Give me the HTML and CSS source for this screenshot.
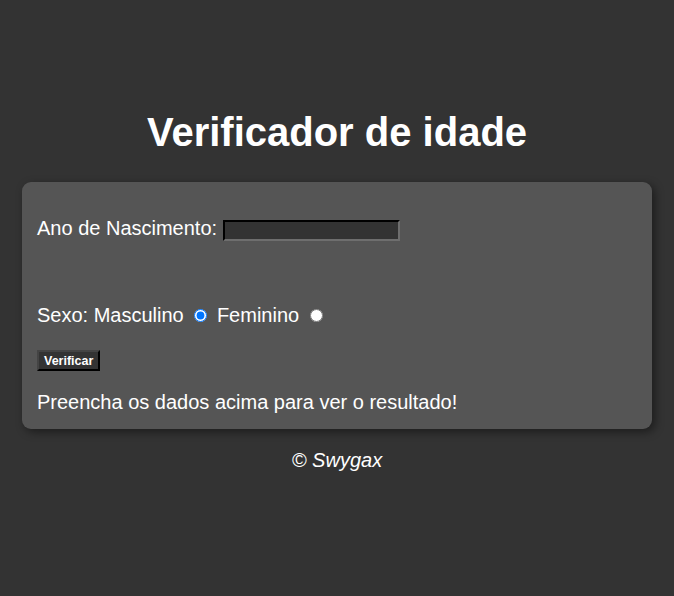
FILE: index.html
```html
<!DOCTYPE html>
<html lang="pt-br">
<head>
<meta charset="UTF-8">
<title>Verificador de idade</title>
<link rel="stylesheet" href="styles.css">
</head>
<body>
<header class="topo">
  <h1 class="titulo">Verificador de idade</h1>
</header>
<section class="painel">
  <div class="form">
    <p class="linha">Ano de Nascimento: <input type="number" class="campo" id="txtano"></p>
    <p class="linha sexo">Sexo:
      <label for="mas">Masculino</label> <input type="radio" name="radsex" id="mas" checked>
      <label for="fem">Feminino</label> <input type="radio" name="radsex" id="fem">
    </p>
    <p class="linha acao"><input type="button" value="Verificar" class="botao"></p>
  </div>
  <div class="res">Preencha os dados acima para ver o resultado!</div>
</section>
<footer class="rodape"><p>&copy; Swygax</p></footer>
</body>
</html>
```
FILE: styles.css
```css
html, body {
  margin: 0;
  padding: 0;
}
body {
  background: #333333;
  color: #ffffff;
  font-family: "Liberation Sans", Arial, sans-serif;
  font-size: 20px;
  padding-top: 109px;
}
.titulo {
  text-align: center;
  font-size: 40px;
  margin: 0 0 27px 0;
  line-height: 46px;
}
.painel {
  background: #555555;
  width: 600px;
  margin: 0 auto;
  padding: 15px;
  border-radius: 9px;
  box-shadow: 3px 3px 10px rgba(0, 0, 0, 0.45);
}
.linha {
  margin: 20px 0 0 0;
  line-height: 23px;
}
.sexo {
  margin-top: 63px;
}
.acao {
  margin-top: 23px;
  line-height: 21px;
}
.campo {
  width: 173px;
  height: 17px;
  box-sizing: content-box;
  padding: 0;
  border: 2px inset #767676;
  border-color: #222222 #6e6e6e #6e6e6e #222222;
  background: #333333;
  color: #ffffff;
  font-size: 13px;
  vertical-align: baseline;
}
.campo::-webkit-inner-spin-button { display: none; }
input[type="radio"] {
  margin: 0 4px 0 5px;
  width: 13px;
  height: 13px;
}
.botao {
  font-family: "Liberation Sans", Arial, sans-serif;
  font-size: 12.5px;
  font-weight: bold;
  color: #ffffff;
  background: #333333;
  border: 2px outset #222222;
  border-color: #444444 #111111 #111111 #444444;
  padding: 1px 5px;
  height: 21px;
  vertical-align: top;
}
.res {
  margin-top: 20px;
  line-height: 23px;
}
.rodape {
  text-align: center;
  font-style: italic;
}
.rodape p {
  margin: 20px 0;
}
```
